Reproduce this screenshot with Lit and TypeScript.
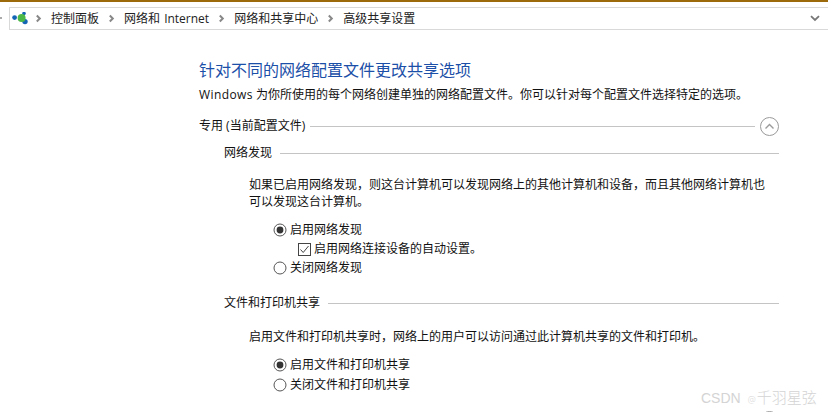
import { LitElement, html, svg, css } from "lit";
import { customElement } from "lit/decorators.js";

const chev = html`<svg class="sep" width="7" height="9" viewBox="0 0 7 9"><path d="M1.8 1.5 L4.8 4.5 L1.8 7.5" fill="none" stroke="#888" stroke-width="2"/></svg>`;

@customElement("app-root")
export class AppRoot extends LitElement {
  static styles = css`
    :host { display: block; width: 828px; height: 412px; overflow: hidden; position: relative; background: #fff;
      font-family: "Open Sans", "Noto Sans CJK SC", sans-serif; font-size: 12px; color: #111; line-height: 16px; }
    .accent { height: 2px; background: #9c6a0a; }
    .nav { display: flex; align-items: flex-start; height: 30px; padding-top: 5px; box-sizing: border-box; }
    .lead { width: 9px; height: 22px; display: flex; align-items: center; }
    .dot { width: 2px; height: 2px; background: #aaa; }
    .crumbs { flex: 1; height: 23px; box-sizing: border-box; border: 1px solid #d9d9d9; border-right: none; display: flex; align-items: center; padding-left: 2px; }
    .logo { margin-right: 6px; }
    .sep { margin-right: 9px; }
    .crumb { margin-right: 9px; white-space: nowrap; color: #222; word-spacing: 1px; }
    .down { margin-left: auto; margin-right: 8px; }
    .main { margin-left: 199px; width: 580px; padding-top: 27px; }
    h1 { margin: 0; font-size: 16px; font-weight: 400; line-height: 22px; color: #1b4fa8; white-space: nowrap; }
    .desc { margin-top: 6px; white-space: nowrap; }
    .win { letter-spacing: 0.4px; }
    .head { display: flex; align-items: center; gap: 5px; white-space: nowrap; }
    .rule { flex: 1; height: 1px; background: #c4c4c4; }
    .profile { margin-top: 13px; height: 20px; }
    .group { margin-left: 25px; margin-top: 8px; height: 18px; gap: 8px; }
    .group.next { margin-top: 18px; }
    .para { margin: 14px 0 0 50px; line-height: 17px; width: 520px; }
    .para.one { margin-top: 16px; }
    .opts { margin: 12px 0 0 74px; display: flex; flex-direction: column; gap: 3px; }
    .opts.second { margin-top: 12px; gap: 4px; }
    .opt { display: flex; align-items: center; height: 16px; white-space: nowrap; }
    .opt svg { margin-right: 3px; }
    .sub { margin-left: 25px; }
    .cut { margin-top: 17px; display: flex; align-items: center; gap: 5px; height: 20px; }
    .wm { position: absolute; left: 701px; top: 388px; font-size: 15px; line-height: 18px; color: #d4d4d4; white-space: nowrap; font-weight: 300; }
    .wm .latin { font-size: 14px; font-family: "Liberation Sans", sans-serif; }
    .wm .at { font-size: 9px; margin: 0 1px 0 7px; }
  `;

  radio(on: boolean) {
    return html`<svg width="14" height="14" viewBox="0 0 14 14"><circle cx="7" cy="7" r="6" fill="#fff" stroke="#555" stroke-width="1"/>${on ? svg`<circle cx="7" cy="7" r="3.4" fill="#333"/>` : ""}</svg>`;
  }

  render() {
    return html`
      <div class="accent"></div>
      <div class="nav">
        <div class="lead"><span class="dot"></span></div>
        <div class="crumbs">
          <svg class="logo" width="17" height="14" viewBox="0 0 17 14">
            <circle cx="2.6" cy="5.6" r="2.4" fill="#1565b5"/>
            <circle cx="12" cy="1.6" r="1.8" fill="#1565b5"/>
            <circle cx="13" cy="9.6" r="2.7" fill="#1565b5"/>
            <circle cx="9.6" cy="6" r="4" fill="#4cb848"/>
          </svg>
          ${chev}<span class="crumb">控制面板</span>
          ${chev}<span class="crumb">网络和 Internet</span>
          ${chev}<span class="crumb">网络和共享中心</span>
          ${chev}<span class="crumb">高级共享设置</span>
          <svg class="down" width="10" height="7" viewBox="0 0 10 7"><path d="M1 1.2 L5 5 L9 1.2" fill="none" stroke="#777" stroke-width="1.8"/></svg>
        </div>
      </div>
      <div class="main">
        <h1>针对不同的网络配置文件更改共享选项</h1>
        <div class="desc"><span class="win">Windows</span> 为你所使用的每个网络创建单独的网络配置文件。你可以针对每个配置文件选择特定的选项。</div>
        <div class="head profile">
          <span>专用 (当前配置文件)</span><span class="rule"></span>
          <svg width="19" height="19" viewBox="0 0 19 19"><circle cx="9.5" cy="9.5" r="9" fill="none" stroke="#9a9a9a"/><path d="M5.5 11.5 L9.5 7.5 L13.5 11.5" fill="none" stroke="#9a9a9a" stroke-width="1.4"/></svg>
        </div>
        <div class="head group"><span>网络发现</span><span class="rule"></span></div>
        <div class="para">如果已启用网络发现，则这台计算机可以发现网络上的其他计算机和设备，而且其他网络计算机也可以发现这台计算机。</div>
        <div class="opts">
          <div class="opt">${this.radio(true)}<span>启用网络发现</span></div>
          <div class="opt sub">
            <svg width="13" height="13" viewBox="0 0 13 13"><rect x="0.5" y="0.5" width="12" height="12" fill="#fff" stroke="#444"/><path d="M2.5 6.5 L5.2 9.5 L10.5 3" fill="none" stroke="#444" stroke-width="1"/></svg>
            <span>启用网络连接设备的自动设置。</span>
          </div>
          <div class="opt">${this.radio(false)}<span>关闭网络发现</span></div>
        </div>
        <div class="head group next"><span>文件和打印机共享</span><span class="rule"></span></div>
        <div class="para one">启用文件和打印机共享时，网络上的用户可以访问通过此计算机共享的文件和打印机。</div>
        <div class="opts second">
          <div class="opt">${this.radio(true)}<span>启用文件和打印机共享</span></div>
          <div class="opt">${this.radio(false)}<span>关闭文件和打印机共享</span></div>
        </div>
        <div class="cut"><span>来宾或公用</span><span class="rule"></span>
          <svg width="19" height="19" viewBox="0 0 19 19"><circle cx="9.5" cy="9.5" r="9" fill="none" stroke="#9a9a9a"/></svg>
        </div>
      </div>
      <div class="wm"><span class="latin">CSDN</span><span class="at">@</span>千羽星弦</div>
    `;
  }
}
